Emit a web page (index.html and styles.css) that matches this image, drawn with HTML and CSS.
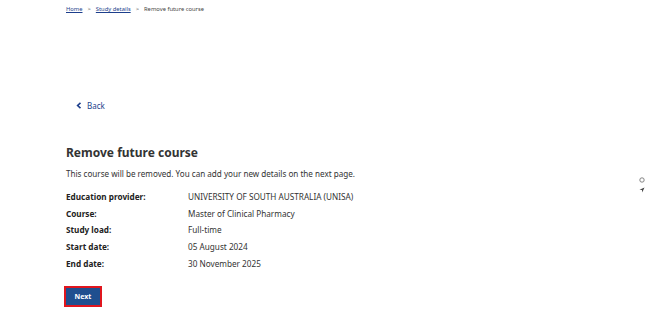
FILE: index.html
```html
<!DOCTYPE html>
<html lang="en">
<head>
    <meta charset="UTF-8">
    <title>Remove future course</title>
    <link rel="stylesheet" href="styles.css">
</head>
<body>
    <div class="page">
        <nav class="breadcrumb">
            <a href="#">Home</a>
            <span class="sep">&gt;</span>
            <a href="#">Study details</a>
            <span class="sep">&gt;</span>
            <span>Remove future course</span>
        </nav>

        <a href="#" class="back">
            <svg width="6" height="7" viewBox="0 0 6 7"><path d="M4.5 0.8 L1.6 3.5 L4.5 6.2" fill="none" stroke="#1d3f8c" stroke-width="1.6"/></svg>
            <span>Back</span>
        </a>

        <h1 class="title">Remove future course</h1>
        <p class="intro">This course will be removed. You can add your new details on the next page.</p>

        <dl class="details">
            <dt>Education provider:</dt>
            <dd>UNIVERSITY OF SOUTH AUSTRALIA (UNISA)</dd>
            <dt>Course:</dt>
            <dd>Master of Clinical Pharmacy</dd>
            <dt>Study load:</dt>
            <dd>Full-time</dd>
            <dt>Start date:</dt>
            <dd>05 August 2024</dd>
            <dt>End date:</dt>
            <dd>30 November 2025</dd>
        </dl>

        <button class="btn-next">Next</button>
    </div>

    <div class="side-tools">
        <svg width="6" height="6" viewBox="0 0 6 6"><circle cx="3" cy="3" r="2.2" fill="none" stroke="#777" stroke-width="0.9"/></svg>
        <svg width="6" height="6" viewBox="0 0 6 6"><path d="M5.5 0.5 L0.5 2.8 L3 3 L3.2 5.5 Z" fill="#444"/></svg>
    </div>
</body>
</html>
```

FILE: styles.css
```css
* {
    margin: 0;
    padding: 0;
    box-sizing: border-box;
}

body {
    font-family: "Noto Sans", "Open Sans", sans-serif;
    color: #333;
    background: #fff;
}

.page {
    padding: 4px 0 0 66px;
}

.breadcrumb {
    font-size: 5.8px;
    color: #444;
    display: flex;
    gap: 5px;
    align-items: center;
    height: 10px;
}

.breadcrumb a {
    color: #1d3f8c;
    text-decoration: underline;
}

.back {
    display: inline-flex;
    align-items: center;
    gap: 5px;
    margin: 86px 0 0 10px;
    color: #1d3f8c;
    font-size: 8px;
    text-decoration: none;
}

.title {
    font-size: 12px;
    font-weight: 700;
    color: #333;
    margin-top: 30px;
    line-height: 18px;
}

.intro {
    font-size: 8.1px;
    margin-top: 6px;
    line-height: 12px;
}

.details {
    display: grid;
    grid-template-columns: 122px auto;
    grid-auto-rows: 16.7px;
    align-items: center;
    margin-top: 8px;
    font-size: 8.2px;
}

.details dt {
    font-weight: 700;
    color: #222;
}

.btn-next {
    margin-top: 15px;
    margin-left: -2px;
    width: 38px;
    height: 21px;
    background: #1f4f8f;
    border: 2px solid #e0161e;
    color: #fff;
    font-family: inherit;
    font-size: 7px;
    font-weight: 700;
}

.side-tools {
    position: fixed;
    right: 5px;
    top: 177px;
    display: flex;
    flex-direction: column;
    gap: 4px;
}
```
